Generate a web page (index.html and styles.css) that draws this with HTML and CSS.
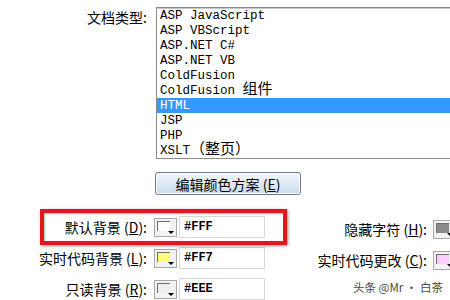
FILE: index.html
```html
<!DOCTYPE html>
<html lang="zh">
<head>
<meta charset="utf-8">
<link rel="stylesheet" href="styles.css">
</head>
<body>
<div class="page">
  <div class="doc-row">
    <div class="lbl doc-lbl">文档类型:</div>
    <ul class="listbox">
      <li>ASP JavaScript</li>
      <li>ASP VBScript</li>
      <li>ASP.NET C#</li>
      <li>ASP.NET VB</li>
      <li>ColdFusion</li>
      <li>ColdFusion <span class="cjk">组件</span></li>
      <li class="sel">HTML</li>
      <li>JSP</li>
      <li>PHP</li>
      <li>XSLT<span class="cjk">（整页）</span></li>
    </ul>
  </div>
  <div class="btn-row">
    <button class="btn">编辑颜色方案 (<u>E</u>)</button>
  </div>
  <div class="opts">
    <div class="opt-row">
      <div class="lbl">默认背景 (<u>D</u>):</div>
      <div class="sw"><span class="sw-fill c-fff"></span></div>
      <div class="inp">#FFF</div>
      <div class="rlbl">隐藏字符 (<u>H</u>):</div>
      <div class="sw sw-r1"><span class="sw-fill c-grey"></span></div>
    </div>
    <div class="opt-row">
      <div class="lbl">实时代码背景 (<u>L</u>):</div>
      <div class="sw"><span class="sw-fill c-ff7"></span></div>
      <div class="inp">#FF7</div>
      <div class="rlbl">实时代码更改 (<u>C</u>):</div>
      <div class="sw sw-r2"><span class="sw-fill c-pink"></span></div>
    </div>
    <div class="opt-row">
      <div class="lbl">只读背景 (<u>R</u>):</div>
      <div class="sw"><span class="sw-fill c-eee"></span></div>
      <div class="inp">#EEE</div>
    </div>
  </div>
  <div class="highlight"></div>
  <div class="watermark">头条 @Mr · 白茶</div>
</div>
</body>
</html>
```
FILE: styles.css
```css
html, body {
  margin: 0;
  padding: 0;
  background: #fff;
}
body {
  width: 450px;
  height: 300px;
  overflow: hidden;
  font-family: "Noto Sans CJK SC", "Liberation Sans", sans-serif;
  font-size: 14px;
  color: #000;
}
.page {
  position: relative;
  width: 450px;
  height: 300px;
  padding-top: 7px;
  box-sizing: border-box;
}
.doc-row {
  display: flex;
  align-items: flex-start;
}
.lbl {
  width: 147px;
  text-align: right;
  white-space: nowrap;
  flex: none;
}
.doc-lbl {
  line-height: 20px;
}
.listbox {
  list-style: none;
  margin: 0 0 0 9px;
  padding: 0;
  width: 320px;
  flex: none;
  border: 1px solid #8c8c8c;
  box-shadow: inset 0 1px 0 #c8c8c8;
  font-family: "Liberation Mono", "Noto Sans CJK SC", monospace;
  font-size: 12.5px;
}
.listbox li {
  height: 15px;
  line-height: 16px;
  padding-left: 3px;
  white-space: nowrap;
}
.listbox .cjk {
  font-family: "Noto Sans CJK SC", sans-serif;
  font-size: 15px;
  line-height: 0;
}
.listbox .sel {
  background: #3399ff;
  color: #fff;
}
.btn-row {
  padding-left: 155px;
  margin-top: 13px;
}
.btn {
  display: block;
  width: 146px;
  height: 23px;
  padding: 0;
  border: 1px solid #707c8c;
  border-radius: 3px;
  background: linear-gradient(#f4f8fc, #dde9f5 50%, #c9dcef);
  box-shadow: inset 0 0 0 1px #fbfdff;
  font-family: "Noto Sans CJK SC", sans-serif;
  font-size: 14px;
  line-height: 20px;
  color: #000;
}
.btn u, .lbl u, .rlbl u {
  text-decoration-thickness: 1px;
}
.opts {
  margin-top: 21px;
  display: flex;
  flex-direction: column;
  gap: 9px;
}
.opt-row {
  display: flex;
  align-items: center;
  height: 22px;
}
.sw {
  position: relative;
  flex: none;
  width: 23px;
  height: 19px;
  margin-left: 7px;
  box-sizing: border-box;
  border: 1px solid #a8a8a8;
  background: #f2f2f2;
}
.sw::after {
  content: "";
  position: absolute;
  right: 2px;
  bottom: 2px;
  border-left: 3px solid transparent;
  border-right: 3px solid transparent;
  border-top: 3px solid #000;
}
.sw-fill {
  position: absolute;
  left: 2px;
  top: 2px;
  right: 6px;
  bottom: 5px;
  border-left: 1px solid #6e6e6e;
  border-top: 1px solid #6e6e6e;
}
.c-fff { background: #ffffff; }
.c-ff7 { background: #ffff77; }
.c-eee { background: #eeeeee; }
.c-grey { background: #8a8a8a; }
.c-pink { background: #ffccff; }
.inp {
  flex: none;
  width: 86px;
  height: 22px;
  margin-left: 2px;
  box-sizing: border-box;
  border: 1px solid #d8d8d8;
  padding-left: 4px;
  font-family: "Liberation Mono", monospace;
  font-weight: bold;
  font-size: 12px;
  line-height: 20px;
}
.rlbl {
  flex: none;
  width: 162px;
  text-align: right;
  white-space: nowrap;
  padding-top: 3px;
}
.sw-r1, .sw-r2 {
  margin-left: 6px;
  margin-top: 4px;
}
.highlight {
  position: absolute;
  left: 40px;
  top: 209px;
  width: 247px;
  height: 36px;
  box-sizing: border-box;
  border: 4px solid #e3151d;
  box-shadow: 1px 1px 3px rgba(0, 0, 0, 0.45), inset 1px 1px 2px rgba(0, 0, 0, 0.3);
}
.watermark {
  position: absolute;
  left: 353px;
  top: 279px;
  font-family: "Noto Sans CJK SC", sans-serif;
  font-size: 11.5px;
  line-height: 16px;
  color: #4a4a4a;
  white-space: nowrap;
}
```
